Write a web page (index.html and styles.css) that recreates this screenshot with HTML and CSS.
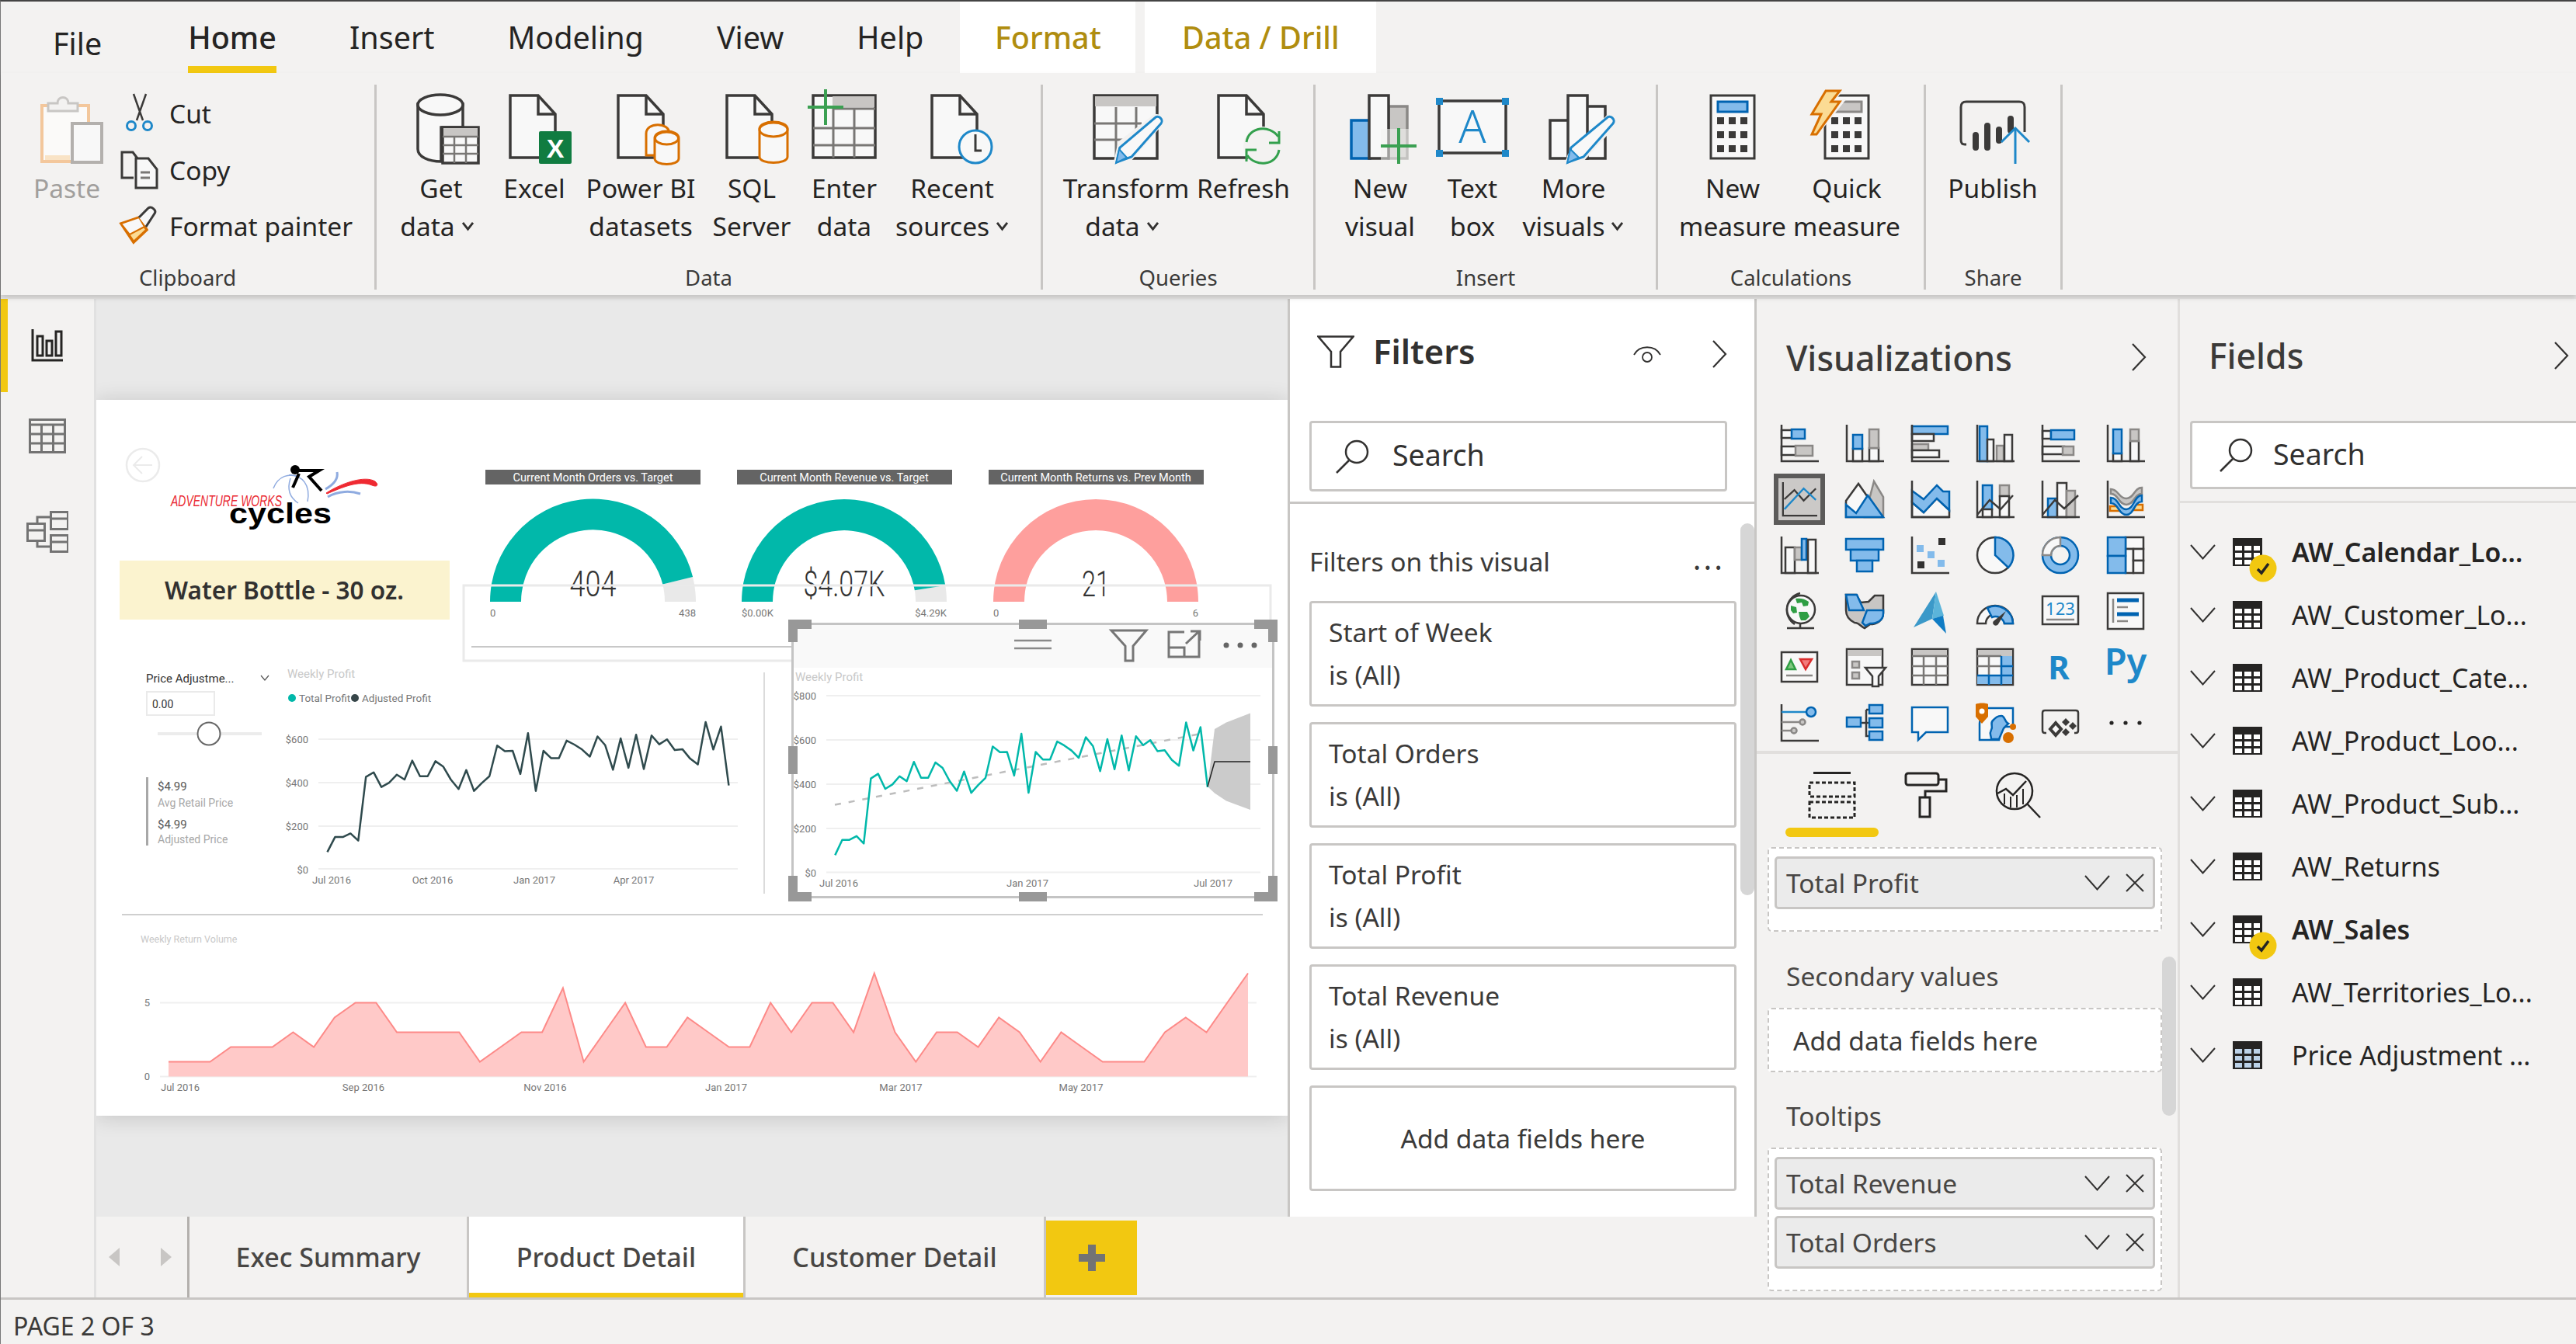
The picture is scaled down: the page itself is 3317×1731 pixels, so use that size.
FILE: index.html
```html
<!DOCTYPE html>
<html lang="en">
<head>
<meta charset="utf-8">
<title>Power BI Desktop</title>
<link rel="stylesheet" href="styles.css">
</head>
<body>
<svg class="defs" aria-hidden="true">
  <symbol id="doc" viewBox="0 0 62 84" overflow="visible">
    <path class="fw" d="M2 2H38L60 26V82H2Z"/><path class="ln" d="M38 2V26H60"/>
  </symbol>
  <symbol id="chev" viewBox="0 0 33 20"><path d="M1 1L16.500 18.500L32 1" fill="none" stroke="#323130" stroke-width="2"/></symbol>
  <symbol id="pchev" viewBox="0 0 20 36"><path d="M2 1L18 18L2 35" fill="none" stroke="#323130" stroke-width="2.200"/></symbol>
  <symbol id="xx" viewBox="0 0 24 24"><path d="M1 1L23 23M23 1L1 23" fill="none" stroke="#323130" stroke-width="2"/></symbol>
  <symbol id="mag" viewBox="0 0 44 44"><circle cx="28" cy="16" r="14" fill="none" stroke="#323130" stroke-width="2.500"/><path d="M18 27L2 43" fill="none" stroke="#323130" stroke-width="2.500"/></symbol>
  <symbol id="tbl" viewBox="0 0 38 36"><rect width="38" height="36" fill="#252423"/><g fill="#fff"><rect x="3" y="10" width="9" height="6"/><rect x="15" y="10" width="9" height="6"/><rect x="27" y="10" width="8" height="6"/><rect x="3" y="19" width="9" height="6"/><rect x="15" y="19" width="9" height="6"/><rect x="27" y="19" width="8" height="6"/><rect x="3" y="28" width="9" height="6"/><rect x="15" y="28" width="9" height="6"/><rect x="27" y="28" width="8" height="6"/></g></symbol>
  <symbol id="tblb" viewBox="0 0 38 36"><rect width="38" height="36" fill="#252423"/><g fill="#bcd2e8"><rect x="3" y="10" width="9" height="6"/><rect x="15" y="10" width="9" height="6"/><rect x="27" y="10" width="8" height="6"/><rect x="3" y="19" width="9" height="6"/><rect x="15" y="19" width="9" height="6"/><rect x="27" y="19" width="8" height="6"/><rect x="3" y="28" width="9" height="6"/><rect x="15" y="28" width="9" height="6"/><rect x="27" y="28" width="8" height="6"/></g></symbol>
  <symbol id="badge" viewBox="0 0 36 36"><circle cx="18" cy="18" r="17.500" fill="#f2c811"/><path d="M11 19L16 24L25 12" fill="none" stroke="#252423" stroke-width="3.500"/></symbol>
  <symbol id="caret" viewBox="0 0 18 14"><path d="M2 2L9 11L16 2" fill="none" stroke="#323130" stroke-width="3"/></symbol>
</svg>

<div class="app">
  <nav class="tabs">
    <span class="tab tab-file">File</span>
    <span class="tab tab-on"><span class="tab-under">Home</span></span>
    <span class="tab">Insert</span>
    <span class="tab">Modeling</span>
    <span class="tab">View</span>
    <span class="tab">Help</span>
    <span class="tab-ctx tab-format">Format</span>
    <span class="tab-ctx tab-drill">Data / Drill</span>
  </nav>

  <header class="ribbon">
    <section class="group g-clip">
      <div class="group-body">
        <div class="rb paste">
          <svg class="ri" viewBox="26 121 120 90">
            <rect x="54" y="136" width="60" height="72" fill="#fbfaf9" stroke="#f3c79c" stroke-width="4"/>
            <path d="M62 143H100V133H88C88 123 74 123 74 133H62Z" fill="#f3f2f1" stroke="#c8c6c4" stroke-width="3"/>
            <path d="M58 200H90V206H58Z" fill="#f9e3c6"/>
            <rect x="93" y="159" width="38" height="50" fill="#f8f8f8" stroke="#b3b0ad" stroke-width="4"/>
          </svg>
          <span class="rl dim">Paste</span>
        </div>
        <div class="smalls">
          <div class="srow">
            <svg class="si" viewBox="0 0 50 50"><path d="M17 0L29 34M33 0L21 34" fill="none" stroke="#3b3a39" stroke-width="2.500"/><circle cx="14" cy="41" r="5.500" fill="none" stroke="#1e88c9" stroke-width="3"/><circle cx="35" cy="41" r="5.500" fill="none" stroke="#1e88c9" stroke-width="3"/></svg>
            <span class="sl">Cut</span>
          </div>
          <div class="srow">
            <svg class="si" viewBox="0 0 50 50"><path d="M17 35H2V2H16L22 10" fill="#f3f2f1" stroke="#3b3a39" stroke-width="3"/><path d="M20 10H36L47 24V48H20Z" fill="#f8f8f8" stroke="#3b3a39" stroke-width="3"/><path d="M26 28H38M26 35H38" stroke="#797775" stroke-width="3"/></svg>
            <span class="sl">Copy</span>
          </div>
          <div class="srow">
            <svg class="si" viewBox="0 0 50 50"><path d="M1 22L17 46L34 30L24 14Z" fill="#fbdb94" stroke="#d86f00" stroke-width="3.500"/><path d="M1 22L24 14L31 26L12 36Z" fill="#f8f8f8" stroke="#d86f00" stroke-width="2"/><path d="M24 14L36 2C40 -1 47 5 44 9L33 26" fill="#f8f8f8" stroke="#3b3a39" stroke-width="3"/></svg>
            <span class="sl">Format painter</span>
          </div>
        </div>
      </div>
      <div class="group-label">Clipboard</div>
    </section>

    <section class="group g-data">
      <div class="group-body">
        <div class="rb w120">
          <svg class="ri" viewBox="508 121 120 90">
            <path class="fw" d="M538 134V192C538 202 552 208 568 208V164H596V134Z"/>
            <ellipse class="fw" cx="567" cy="135" rx="29" ry="13"/>
            <rect x="570" y="164" width="46" height="46" fill="#f8f8f8" stroke="#3b3a39" stroke-width="3.500"/>
            <rect x="571" y="165" width="44" height="11" fill="#c8c6c4"/>
            <path d="M570 176H616M585 176V210M600 176V210M570 187H616M570 198H616" stroke="#797775" stroke-width="2.500"/>
          </svg>
          <span class="rl">Get</span><span class="rl sh">data<svg class="caret"><use href="#caret"/></svg></span>
        </div>
        <div class="rb w120">
          <svg class="ri" viewBox="628 121 120 90">
            <use href="#doc" x="655" y="121" width="62" height="84"/>
            <rect x="694" y="169" width="42" height="42" rx="2" fill="#107c41"/>
            <text class="xl" x="715" y="203">X</text>
          </svg>
          <span class="rl">Excel</span><span class="rl">&nbsp;</span>
        </div>
        <div class="rb w154">
          <svg class="ri" viewBox="765 121 120 90">
            <use href="#doc" x="794" y="121" width="62" height="84"/>
            <path class="or" d="M832 172C832 157 862 157 862 172V200H832Z"/>
            <path class="or" d="M843 178V204C843 214 874 214 874 204V178C874 166 843 166 843 178Z"/>
            <ellipse class="or" cx="858.500" cy="178" rx="15" ry="8"/>
          </svg>
          <span class="rl">Power BI</span><span class="rl">datasets</span>
        </div>
        <div class="rb w132">
          <svg class="ri" viewBox="908 121 120 90">
            <use href="#doc" x="934" y="121" width="62" height="84"/>
            <path class="or" d="M978 166V202C978 212 1014 212 1014 202V166C1014 154 978 154 978 166Z"/>
            <ellipse class="or" cx="996" cy="167" rx="18" ry="9"/>
          </svg>
          <span class="rl">SQL</span><span class="rl">Server</span>
        </div>
        <div class="rb w106">
          <svg class="ri" viewBox="1027 121 120 90">
            <rect x="1047" y="123" width="80" height="80" fill="#f8f8f8" stroke="#3b3a39" stroke-width="3.500"/>
            <rect x="1072" y="124" width="54" height="14" fill="#c8c6c4"/>
            <path d="M1073 140H1127M1047 165H1127M1047 187H1127M1073 140V203M1100 140V203" stroke="#797775" stroke-width="3"/>
            <path d="M1063 115V161M1040 138H1086" stroke="#3ba052" stroke-width="4"/>
          </svg>
          <span class="rl">Enter</span><span class="rl">data</span>
        </div>
        <div class="rb w172">
          <svg class="ri" viewBox="1166 121 120 90">
            <use href="#doc" x="1198" y="121" width="62" height="84"/>
            <circle cx="1256" cy="189" r="21" fill="#f8f8f8" stroke="#1e88c9" stroke-width="3"/>
            <path d="M1256 173V194H1264" fill="none" stroke="#3b3a39" stroke-width="3"/>
          </svg>
          <span class="rl">Recent</span><span class="rl">sources<svg class="caret"><use href="#caret"/></svg></span>
        </div>
      </div>
      <div class="group-label">Data</div>
    </section>

    <section class="group g-query">
      <div class="group-body">
        <div class="rb w172">
          <svg class="ri" viewBox="1390 121 120 90">
            <rect x="1409" y="123" width="81" height="81" fill="#f8f8f8" stroke="#3b3a39" stroke-width="3.500"/>
            <rect x="1410" y="124" width="79" height="13" fill="#c8c6c4"/>
            <path d="M1437 138V204M1463 138V180M1409 159H1470M1409 180H1450" stroke="#797775" stroke-width="3"/>
            <path d="M1442 184L1484 152C1489 146 1498 152 1496 158L1456 204L1436 211Z" fill="#f8f8f8" stroke="#f3f2f1" stroke-width="5"/>
            <path d="M1438 209L1442 190L1487 152C1491 147 1499 154 1495 159L1457 202Z" fill="#f8f8f8" stroke="#1e88c9" stroke-width="3"/>
            <path d="M1437 210L1441 192L1451 203Z" fill="#83bbeb" stroke="#1e88c9" stroke-width="2"/>
          </svg>
          <span class="rl">Transform</span><span class="rl sh">data<svg class="caret"><use href="#caret"/></svg></span>
        </div>
        <div class="rb w130">
          <svg class="ri" viewBox="1541 121 120 90">
            <use href="#doc" x="1567" y="121" width="62" height="84"/>
            <circle cx="1626" cy="188" r="25" fill="#f3f2f1"/>
            <path d="M1605 183C1608 163 1635 160 1646 176M1647 193C1644 213 1617 216 1606 200" fill="none" stroke="#33a04d" stroke-width="3"/>
            <path d="M1647 169V184H1634M1605 208V193H1618" fill="none" stroke="#33a04d" stroke-width="3"/>
          </svg>
          <span class="rl">Refresh</span><span class="rl">&nbsp;</span>
        </div>
      </div>
      <div class="group-label">Queries</div>
    </section>

    <section class="group g-insert">
      <div class="group-body">
        <div class="rb w120">
          <svg class="ri" viewBox="1717 121 120 90">
            <rect x="1740" y="155" width="24" height="49" fill="#83bbeb" stroke="#0063b1" stroke-width="3.500"/>
            <rect x="1788" y="137" width="24" height="67" fill="#c8c6c4" stroke="#8a8886" stroke-width="3.500"/>
            <rect x="1763" y="123" width="25" height="81" fill="#f8f8f8" stroke="#3b3a39" stroke-width="3.500"/>
            <rect x="1778" y="166" width="46" height="44" fill="#f3f2f1" opacity=".55"/>
            <path d="M1801 165V211M1778 188H1824" stroke="#3ba052" stroke-width="4"/>
          </svg>
          <span class="rl">New</span><span class="rl">visual</span>
        </div>
        <div class="rb w118">
          <svg class="ri" viewBox="1836 121 120 90">
            <rect x="1853" y="130" width="86" height="67" fill="#f8f8f8" stroke="#3b3a39" stroke-width="3.500"/>
            <text class="tbA" x="1896" y="184">A</text>
            <path d="M1849 126h9v9h-9zM1934 126h9v9h-9zM1849 193h9v9h-9zM1934 193h9v9h-9z" fill="#1e88c9"/>
          </svg>
          <span class="rl">Text</span><span class="rl">box</span>
        </div>
        <div class="rb w142">
          <svg class="ri" viewBox="1966 121 120 90">
            <rect x="1996" y="155" width="24" height="49" fill="#f8f8f8" stroke="#3b3a39" stroke-width="3.500"/>
            <rect x="2043" y="137" width="24" height="67" fill="#f8f8f8" stroke="#3b3a39" stroke-width="3.500"/>
            <rect x="2019" y="123" width="25" height="81" fill="#f8f8f8" stroke="#3b3a39" stroke-width="3.500"/>
            <path d="M2021 200L2069 152C2073 146 2083 152 2079 160L2039 204L2017 212Z" fill="#f8f8f8" stroke="#f3f2f1" stroke-width="5"/>
            <path d="M2019 209L2023 190L2069 152C2073 147 2081 154 2077 159L2039 202Z" fill="#f8f8f8" stroke="#1e88c9" stroke-width="3"/>
            <path d="M2018 210L2022 192L2033 203Z" fill="#83bbeb" stroke="#1e88c9" stroke-width="2"/>
          </svg>
          <span class="rl">More</span><span class="rl">visuals<svg class="caret"><use href="#caret"/></svg></span>
        </div>
      </div>
      <div class="group-label">Insert</div>
    </section>

    <section class="group g-calc">
      <div class="group-body">
        <div class="rb w150">
          <svg class="ri" viewBox="2171 121 120 90">
            <rect x="2203" y="123" width="56" height="81" fill="#f8f8f8" stroke="#3b3a39" stroke-width="3"/>
            <rect x="2212" y="131" width="38" height="13" fill="#83bbeb" stroke="#0063b1" stroke-width="3"/>
            <path fill="#3b3a39" d="M2211 151h9v9h-9zM2226 151h9v9h-9zM2241 151h9v9h-9zM2211 169h9v9h-9zM2226 169h9v9h-9zM2241 169h9v9h-9zM2211 187h9v9h-9zM2226 187h9v9h-9zM2241 187h9v9h-9z"/>
          </svg>
          <span class="rl">New</span><span class="rl">measure</span>
        </div>
        <div class="rb w144">
          <svg class="ri" viewBox="2318 121 120 90">
            <rect x="2350" y="123" width="56" height="81" fill="#f8f8f8" stroke="#3b3a39" stroke-width="3"/>
            <rect x="2359" y="131" width="38" height="13" fill="#c8c6c4" stroke="#8a8886" stroke-width="3"/>
            <path fill="#3b3a39" d="M2358 151h9v9h-9zM2373 151h9v9h-9zM2388 151h9v9h-9zM2358 169h9v9h-9zM2373 169h9v9h-9zM2388 169h9v9h-9zM2358 187h9v9h-9zM2373 187h9v9h-9zM2388 187h9v9h-9z"/>
            <path d="M2351 117H2369L2358 131H2371L2335 176H2331L2345 147H2331Z" fill="#f3f2f1" stroke="#f3f2f1" stroke-width="6"/>
            <path d="M2351 117H2369L2358 131H2369L2339 173H2333L2345 147H2333Z" fill="#fbdb94" stroke="#d86f00" stroke-width="3"/>
          </svg>
          <span class="rl">Quick</span><span class="rl">measure</span>
        </div>
      </div>
      <div class="group-label">Calculations</div>
    </section>

    <section class="group g-share">
      <div class="group-body">
        <div class="rb w120">
          <svg class="ri" viewBox="2506 121 120 90">
            <path d="M2532 186H2530C2526 186 2525 184 2525 180V138C2525 133 2527 131 2532 131H2600C2605 131 2607 133 2607 138V170" fill="none" stroke="#3b3a39" stroke-width="3"/>
            <path d="M2544 174V190M2559 162V190M2574 167V181M2589 153V168" stroke="#3b3a39" stroke-width="8" stroke-linecap="round"/>
            <path d="M2577 183L2595 165L2613 183" fill="#f3f2f1" stroke="#1e88c9" stroke-width="3"/>
            <path d="M2595 165V211" stroke="#1e88c9" stroke-width="3"/>
          </svg>
          <span class="rl">Publish</span><span class="rl">&nbsp;</span>
        </div>
      </div>
      <div class="group-label">Share</div>
    </section>
  </header>

  <main class="main">
    <aside class="rail">
      <div class="rail-item rail-on">
        <svg class="rail-ic" viewBox="0 0 42 42"><path d="M2 0V40H41" fill="none" stroke="#252423" stroke-width="3"/><path d="M8 9h7v25h-7zM20 15h7v19h-7zM32 3h7v31h-7z" fill="none" stroke="#252423" stroke-width="3"/></svg>
      </div>
      <div class="rail-item">
        <svg class="rail-ic rail-t" viewBox="0 0 48 45"><path d="M1.500 1.500h45v42h-45zM1.500 8h45M1.500 20h45M1.500 32h45M16.500 8v36M31.500 8v36" fill="none" stroke="#737373" stroke-width="3"/></svg>
      </div>
      <div class="rail-item">
        <svg class="rail-ic rail-m" viewBox="0 0 54 54"><g fill="#f3f2f1" stroke="#737373" stroke-width="3"><path d="M14 16V8H32M14 38V46H32" fill="none"/><path d="M1.500 16.500h22v22h-22zM1.500 25h22M31.500 1.500h22v22h-22zM31.500 10h22M31.500 31.500h22v21h-22zM31.500 40h22"/></g></svg>
      </div>
    </aside>

    <div class="center">
      <div class="center-row">
        <div class="canvas">
          <div class="page">
            <svg class="report" viewBox="124 515 1534 922">
              <!-- back button -->
              <circle cx="184" cy="599" r="21" fill="#fff" stroke="#ebebeb" stroke-width="2.500"/>
              <path d="M196 599H172M183 588L172 599L183 610" fill="none" stroke="#ebebeb" stroke-width="2"/>

              <!-- logo -->
              <path d="M352 629C358 613 372 609 386 614M372 612C390 612 400 625 396 646M374 616C370 628 372 640 384 648" fill="none" stroke="#8fabe0" stroke-width="1.500"/>
              <circle cx="380" cy="605" r="6" fill="#000"/>
              <path d="M384 606H411L398 614L414 632M385 610L377 628" fill="none" stroke="#000" stroke-width="4"/>
              <path d="M420 635C440 622 470 612 483 620C488 624 486 628 479 625C462 618 440 628 421 636Z" fill="#ef2a32" stroke="#ef2a32"/>
              <path d="M419 630C428 625 436 618 434 608M422 640C436 632 452 632 464 636" fill="none" stroke="#8fabe0" stroke-width="3"/>
              <text class="logo-a" x="220" y="652" textLength="143" lengthAdjust="spacingAndGlyphs">ADVENTURE WORKS</text>
              <text class="logo-b" x="295" y="674" textLength="132" lengthAdjust="spacingAndGlyphs">cycles</text>

              <!-- title card -->
              <rect x="154" y="722" width="425" height="76" fill="#fbf3cf"/>
              <text class="card-title" x="366" y="772">Water Bottle - 30 oz.</text>

              <!-- gauges -->
              <rect x="625" y="605" width="277" height="19" fill="#646464"/>
              <text class="g-head" x="763.500" y="620">Current Month Orders vs. Target</text>
              <path d="M892.100 743A132.500 132.500 0 0 1 896 775H856A92.500 92.500 0 0 0 853.300 752.600Z" fill="#e9e9e9"/>
              <path d="M631 775A132.500 132.500 0 0 1 892.100 743L853.300 752.600A92.500 92.500 0 0 0 671 775Z" fill="#01b8aa"/>
              <text class="g-val" x="763.500" y="768" textLength="60" lengthAdjust="spacingAndGlyphs">404</text>
              <text class="axis" x="631" y="794">0</text>
              <text class="axis end" x="896" y="794">438</text>

              <rect x="949" y="605" width="277" height="19" fill="#646464"/>
              <text class="g-head" x="1087" y="620">Current Month Revenue vs. Target</text>
              <path d="M1217.300 753.900A132 132 0 0 1 1219 775H1179A92 92 0 0 0 1177.800 760.300Z" fill="#e9e9e9"/>
              <path d="M955 775A132 132 0 0 1 1217.300 753.900L1177.800 760.300A92 92 0 0 0 995 775Z" fill="#01b8aa"/>
              <text class="g-val" x="1087" y="768" textLength="105" lengthAdjust="spacingAndGlyphs">$4.07K</text>
              <text class="axis" x="955" y="794">$0.00K</text>
              <text class="axis end" x="1219" y="794">$4.29K</text>

              <rect x="1273" y="605" width="277" height="19" fill="#646464"/>
              <text class="g-head" x="1411" y="620">Current Month Returns vs. Prev Month</text>
              <path d="M1279 775A132 132 0 0 1 1543 775H1503A92 92 0 0 0 1319 775Z" fill="#fe9f9d"/>
              <text class="g-val" x="1411" y="768" textLength="36" lengthAdjust="spacingAndGlyphs">21</text>
              <text class="axis" x="1279" y="794">0</text>
              <text class="axis end" x="1543" y="794">6</text>

              <!-- hovered group outline -->
              <path d="M1636 804V754H597V851H1020" fill="none" stroke="#eaeaea" stroke-width="3"/>
              <path d="M607 833H1020" stroke="#c8c8c8" stroke-width="2"/>

              <!-- slicer -->
              <text class="sl-t" x="188" y="879">Price Adjustme...</text>
              <path d="M336 870L341 876L346 870" fill="none" stroke="#555" stroke-width="1.200"/>
              <rect x="189" y="891" width="87" height="30" fill="#fff" stroke="#eaeaea" stroke-width="2"/>
              <text class="sl-v" x="196" y="912">0.00</text>
              <rect x="203" y="943" width="134" height="4" fill="#ececec"/>
              <circle cx="269" cy="945" r="14.500" fill="#fff" stroke="#666" stroke-width="2"/>

              <!-- KPIs -->
              <rect x="188" y="1001" width="3" height="88" fill="#a8a8a8"/>
              <text class="k-v" x="203" y="1018">$4.99</text>
              <text class="k-l" x="203" y="1039">Avg Retail Price</text>
              <text class="k-v" x="203" y="1067">$4.99</text>
              <text class="k-l" x="203" y="1086">Adjusted Price</text>

              <!-- chart one -->
              <text class="c-title" x="370" y="873">Weekly Profit</text>
              <circle cx="376" cy="899" r="5" fill="#01b8aa"/>
              <text class="leg" x="385" y="904">Total Profit</text>
              <circle cx="457" cy="899" r="5" fill="#374649"/>
              <text class="leg" x="466" y="904">Adjusted Profit</text>
              <path class="grid" d="M410 952H950M410 1008H950M410 1064H950M410 1119H950"/>
              <text class="axis end" x="397" y="957">$600</text>
              <text class="axis end" x="397" y="1013">$400</text>
              <text class="axis end" x="397" y="1069">$200</text>
              <text class="axis end" x="397" y="1125">$0</text>
              <text class="axis mid" x="427" y="1138">Jul 2016</text>
              <text class="axis mid" x="557" y="1138">Oct 2016</text>
              <text class="axis mid" x="688" y="1138">Jan 2017</text>
              <text class="axis mid" x="816" y="1138">Apr 2017</text>
              <polyline class="line-dark" points="421.5,1097.4 431.4,1078.1 441.4,1078.1 451.3,1073.4 461.3,1082.7 471.2,1000.6 481.1,994.7 491.1,1013.7 501,1008.2 511,997.7 520.9,1004 530.8,979.6 540.8,999.8 550.7,999.8 560.7,980.4 570.6,987.2 580.5,1004 590.5,1016.2 600.4,991.8 610.4,1018.7 620.3,1008.6 630.2,999.8 640.2,960.2 650.1,967.4 660.1,967 670,996.9 679.9,944.2 689.9,1018.7 699.8,967 709.8,976.6 719.7,976.6 729.6,953.9 739.6,959 749.5,965.3 759.5,974.5 769.4,948.5 779.3,959.8 789.3,991.4 799.2,951 809.2,988.9 819.1,946.3 829,990.5 839,947.2 848.9,958.6 858.9,952.2 868.8,966.1 878.7,964.9 888.7,977.1 898.6,984.6 908.6,929.9 918.5,965.3 928.4,935.8 938.4,1011.6"/>
              <path d="M984 866V1151" stroke="#cfcfcf" stroke-width="1.500"/>

              <!-- focused visual -->
              <rect x="1020.500" y="803.500" width="619" height="352" fill="#fff" stroke="#c4c4c4" stroke-width="3"/>
              <rect x="1022" y="805" width="616" height="55" fill="#f9f9f9"/>
              <path d="M1306 825H1354M1306 835H1354" stroke="#8a8a8a" stroke-width="2.500"/>
              <path d="M1431 812H1476L1459 832V851H1449V832Z" fill="none" stroke="#767676" stroke-width="3"/>
              <path d="M1525 814H1505V846H1544V814M1505 834H1525V846M1527 829L1544 813M1533 813H1545V825" fill="none" stroke="#767676" stroke-width="3"/>
              <circle cx="1579" cy="831" r="3.500" fill="#666"/><circle cx="1597" cy="831" r="3.500" fill="#666"/><circle cx="1615" cy="831" r="3.500" fill="#666"/>
              <text class="c-title" x="1024" y="877">Weekly Profit</text>
              <path class="grid" d="M1064 896H1623M1064 953H1623M1064 1010H1623M1064 1067H1623M1064 1123.500H1623"/>
              <text class="axis end" x="1051" y="901">$800</text>
              <text class="axis end" x="1051" y="958">$600</text>
              <text class="axis end" x="1051" y="1015">$400</text>
              <text class="axis end" x="1051" y="1072">$200</text>
              <text class="axis end" x="1051" y="1129">$0</text>
              <text class="axis mid" x="1080" y="1142">Jul 2016</text>
              <text class="axis mid" x="1323" y="1142">Jan 2017</text>
              <text class="axis mid" x="1562" y="1142">Jul 2017</text>
              <path d="M1555 1013L1564 939L1579 930.400L1610 918.600V1043L1579 1031.500L1564 1021.600Z" fill="#cbcbcb"/>
              <path d="M1075 1036.600L1551 944" fill="none" stroke="#bdbdbd" stroke-width="2.500" stroke-dasharray="8 10"/>
              <polyline class="line-teal" points="1075.3,1101.4 1084.5,1081.7 1093.8,1081.7 1103,1076.9 1112.2,1086.4 1121.4,1002.6 1130.7,996.6 1139.9,1016 1149.1,1010.4 1158.3,999.7 1167.6,1006.1 1176.8,981.2 1186,1001.8 1195.2,1001.8 1204.5,982 1213.7,989 1222.9,1006.1 1232.1,1018.5 1241.4,993.7 1250.6,1021.1 1259.8,1010.8 1269,1001.8 1278.3,961.4 1287.5,968.8 1296.7,968.4 1305.9,998.9 1315.2,945.1 1324.4,1021.1 1333.6,968.4 1342.8,978.2 1352.1,978.2 1361.3,955 1370.5,960.2 1379.7,966.6 1389,976 1398.2,949.5 1407.4,961 1416.6,993.2 1425.9,952 1435.1,990.7 1444.3,947.2 1453.5,992.3 1462.8,948.2 1472,959.8 1481.2,953.3 1490.4,967.4 1499.7,966.2 1508.9,978.7 1518.1,986.3 1527.3,930.5 1536.6,966.6 1545.8,936.5 1555,1013.9"/>
              <path d="M1555 1013L1564 981H1610" fill="none" stroke="#222" stroke-width="1.500"/>
              <path fill="#989898" d="M1015 798H1045V810H1027V827H1015ZM1615 798H1645V827H1633V810H1615ZM1015 1128H1027V1149H1045V1161H1015ZM1633 1128H1645V1161H1615V1149H1633ZM1312 798H1348V810H1312ZM1312 1149H1348V1161H1312ZM1015 961H1027V997H1015ZM1633 961H1645V997H1633Z"/>

              <!-- return volume -->
              <path d="M157 1178H1626" stroke="#cfcfcf" stroke-width="2"/>
              <text class="c-title small" x="181" y="1214">Weekly Return Volume</text>
              <path class="grid" d="M206 1291.500H1618M206 1386.500H1618"/>
              <text class="axis end" x="193" y="1296">5</text>
              <text class="axis end" x="193" y="1391">0</text>
              <text class="axis mid" x="232" y="1405">Jul 2016</text>
              <text class="axis mid" x="468" y="1405">Sep 2016</text>
              <text class="axis mid" x="702" y="1405">Nov 2016</text>
              <text class="axis mid" x="935" y="1405">Jan 2017</text>
              <text class="axis mid" x="1160" y="1405">Mar 2017</text>
              <text class="axis mid" x="1392" y="1405">May 2017</text>
              <polygon fill="#ffc9c8" points="217,1386.5 217,1367.5 243.7,1367.5 270.5,1367.5 297.2,1348.5 323.9,1348.5 350.7,1348.5 377.4,1329.5 404.1,1348.5 430.8,1310.5 457.6,1291.5 484.3,1291.5 511,1329.5 537.8,1329.5 564.5,1329.5 591.2,1329.5 617.9,1367.5 644.7,1348.5 671.4,1329.5 698.1,1329.5 724.9,1272.5 751.6,1367.5 778.3,1329.5 805.1,1291.5 831.8,1348.5 858.5,1348.5 885.2,1310.5 912,1329.5 938.7,1348.5 965.4,1348.5 992.2,1291.5 1018.9,1329.5 1045.6,1291.5 1072.4,1291.5 1099.1,1329.5 1125.8,1253.5 1152.5,1329.5 1179.3,1367.5 1206,1329.5 1232.7,1329.5 1259.5,1348.5 1286.2,1310.5 1312.9,1329.5 1339.7,1367.5 1366.4,1329.5 1393.1,1348.5 1419.8,1367.5 1446.6,1367.5 1473.3,1367.5 1500,1329.5 1526.8,1310.5 1553.5,1329.5 1580.2,1291.5 1607,1253.5 1607,1386.5"/>
              <polyline class="line-pink" points="217,1367.5 243.7,1367.5 270.5,1367.5 297.2,1348.5 323.9,1348.5 350.7,1348.5 377.4,1329.5 404.1,1348.5 430.8,1310.5 457.6,1291.5 484.3,1291.5 511,1329.5 537.8,1329.5 564.5,1329.5 591.2,1329.5 617.9,1367.5 644.7,1348.5 671.4,1329.5 698.1,1329.5 724.9,1272.5 751.6,1367.5 778.3,1329.5 805.1,1291.5 831.8,1348.5 858.5,1348.5 885.2,1310.5 912,1329.5 938.7,1348.5 965.4,1348.5 992.2,1291.5 1018.9,1329.5 1045.6,1291.5 1072.4,1291.5 1099.1,1329.5 1125.8,1253.5 1152.5,1329.5 1179.3,1367.5 1206,1329.5 1232.7,1329.5 1259.5,1348.5 1286.2,1310.5 1312.9,1329.5 1339.7,1367.5 1366.4,1329.5 1393.1,1348.5 1419.8,1367.5 1446.6,1367.5 1473.3,1367.5 1500,1329.5 1526.8,1310.5 1553.5,1329.5 1580.2,1291.5 1607,1253.5"/>
            </svg>
          </div>
        </div>

        <aside class="filters">
          <div class="f-head">
            <svg class="f-funnel" viewBox="0 0 48 42"><path d="M1.500 1.500H46.500L30 21V40.500H18V21Z" fill="none" stroke="#323130" stroke-width="2.500"/></svg>
            <span class="f-title">Filters</span>
            <svg class="f-eye" viewBox="0 0 36 24"><path d="M1 13C8 0 28 0 35 13" fill="none" stroke="#323130" stroke-width="1.800"/><circle cx="18" cy="16" r="6" fill="none" stroke="#323130" stroke-width="1.800"/></svg>
            <svg class="pchev"><use href="#pchev"/></svg>
          </div>
          <div class="search f-search">
            <svg class="mag"><use href="#mag"/></svg><span>Search</span>
          </div>
          <div class="f-sep"></div>
          <div class="f-sec"><span>Filters on this visual</span><span class="f-dots">...</span></div>
          <div class="f-card">Start of Week<br>is (All)</div>
          <div class="f-card">Total Orders<br>is (All)</div>
          <div class="f-card">Total Profit<br>is (All)</div>
          <div class="f-card">Total Revenue<br>is (All)</div>
          <div class="f-card f-add">Add data fields here</div>
          <div class="thumb f-thumb"></div>
        </aside>
      </div>

      <div class="pagebar">
        <div class="pg-nav">
          <svg class="pg-arrow" viewBox="0 0 14 24"><path d="M14 0V24L0 12Z" fill="#c8c6c4"/></svg>
          <svg class="pg-arrow" viewBox="0 0 14 24"><path d="M0 0V24L14 12Z" fill="#c8c6c4"/></svg>
        </div>
        <div class="pg pg1">Exec Summary</div>
        <div class="pg pg2 pg-on">Product Detail</div>
        <div class="pg pg3">Customer Detail</div>
        <div class="pg-add"><svg class="pg-plus" viewBox="0 0 34 34"><path d="M12 0H22V12H34V22H22V34H12V22H0V12H12Z" fill="#737373"/></svg></div>
      </div>
    </div>

    <aside class="viz">
      <div class="p-head"><span class="p-title">Visualizations</span><svg class="pchev"><use href="#pchev"/></svg></div>
      <div class="viz-grid">
        <div class="vc"><svg class="vi" viewBox="0 0 50 50"><rect class="w" x="2" y="8" width="14" height="10"/><rect class="b" x="15" y="7" width="17" height="12"/><rect class="w" x="2" y="29" width="20" height="11"/><rect class="g" x="20" y="28" width="22" height="13"/><path class="ax" d="M2 1V48H50"/></svg></div>
        <div class="vc"><svg class="vi" viewBox="0 0 50 50"><rect class="w" x="10" y="32" width="12" height="16"/><rect class="b" x="10" y="14" width="12" height="18"/><rect class="w" x="31" y="31" width="12" height="17"/><rect class="g" x="31" y="7" width="12" height="24"/><path class="ax" d="M2 1V48H50"/></svg></div>
        <div class="vc"><svg class="vi" viewBox="0 0 50 50"><rect class="b" x="2" y="3" width="46" height="10"/><rect class="w" x="2" y="13" width="28" height="9"/><rect class="g" x="2" y="26" width="21" height="8"/><rect class="w" x="2" y="34" width="35" height="9"/><path class="ax" d="M2 1V48H50"/></svg></div>
        <div class="vc"><svg class="vi" viewBox="0 0 50 50"><rect class="b" x="5" y="3" width="10" height="45"/><rect class="w" x="15" y="20" width="8" height="28"/><rect class="g" x="27" y="28" width="9" height="20"/><rect class="w" x="37" y="14" width="10" height="34"/><path class="ax" d="M2 1V48H50"/></svg></div>
        <div class="vc"><svg class="vi" viewBox="0 0 50 50"><rect class="w" x="2" y="9" width="11" height="10"/><rect class="b" x="13" y="8" width="30" height="12"/><rect class="w" x="2" y="29" width="28" height="10"/><rect class="g" x="28" y="29" width="14" height="11"/><path class="ax" d="M2 1V48H50"/></svg></div>
        <div class="vc"><svg class="vi" viewBox="0 0 50 50"><rect class="w" x="9" y="38" width="11" height="10"/><rect class="b" x="9" y="7" width="11" height="31"/><rect class="w" x="31" y="22" width="11" height="26"/><rect class="g" x="31" y="7" width="11" height="15"/><path class="ax" d="M2 1V48H50"/></svg></div>

        <div class="vc"><div class="vsel"><svg class="vi" viewBox="0 0 50 50"><path class="ax" d="M2 1V48H50"/><path class="l" d="M4 25L18 12L31 27L48 10"/><path class="lb" d="M4 39L31 10L48 26"/></svg></div></div>
        <div class="vc"><svg class="vi" viewBox="0 0 50 50"><path class="g" d="M37 2L49 22V48H25Z"/><path class="w" d="M1 27L17 5L47 48H1Z"/><path class="b" d="M1 32L14 43L29 20L49 48H1Z"/></svg></div>
        <div class="vc"><svg class="vi" viewBox="0 0 50 50"><path class="w" d="M2 29L17 42L34 24L50 39V48H2Z"/><path class="b" d="M2 14L17 25L34 7L42 15H50V39L34 24L17 42L2 29Z"/><path class="ax" d="M2 1V48H50"/></svg></div>
        <div class="vc"><svg class="vi" viewBox="0 0 50 50"><rect class="b" x="9" y="7" width="12" height="31"/><rect class="w" x="9" y="38" width="12" height="10"/><rect class="g" x="31" y="7" width="12" height="14"/><rect class="w" x="31" y="21" width="12" height="27"/><path class="ax" d="M2 1V48H50"/><path class="l" d="M2 45L18 26L32 38L48 20"/></svg></div>
        <div class="vc"><svg class="vi" viewBox="0 0 50 50"><rect class="b" x="9" y="24" width="12" height="24"/><rect class="w" x="21" y="4" width="12" height="44"/><rect class="g" x="33" y="14" width="11" height="34"/><path class="ax" d="M2 1V48H50"/><path class="l" d="M2 45L18 26L30 37L48 20"/></svg></div>
        <div class="vc"><svg class="vi" viewBox="0 0 50 50"><rect x="5" y="34" width="12" height="6" fill="#fbdb94" stroke="#d86f00" stroke-width="2.500"/><rect x="35" y="32" width="12" height="7" fill="#fbdb94" stroke="#d86f00" stroke-width="2.500"/><path class="g" d="M6 12C16 12 16 24 26 24C36 24 36 10 46 10V18C36 18 36 32 26 32C16 32 16 18 6 18Z"/><path class="b" d="M6 23C16 23 16 38 26 38C36 38 36 20 46 20V28C36 28 36 45 26 45C16 45 16 30 6 30Z"/><path class="ax" d="M2 1V48H50"/></svg></div>

        <div class="vc"><svg class="vi" viewBox="0 0 50 50"><rect class="w" x="7" y="15" width="12" height="33"/><rect class="g" x="19" y="15" width="9" height="16"/><rect class="b" x="28" y="4" width="6" height="27"/><rect class="w" x="36" y="5" width="10" height="43"/><path class="ax" d="M2 1V48H50"/></svg></div>
        <div class="vc"><svg class="vi" viewBox="0 0 50 50"><rect class="b" x="1" y="4" width="48" height="14"/><rect class="b" x="7" y="18" width="36" height="14"/><rect class="b" x="15" y="32" width="20" height="14"/></svg></div>
        <div class="vc"><svg class="vi" viewBox="0 0 50 50"><path class="ax" d="M2 1V48H50"/><path fill="#83bbeb" d="M8 12h9v9h-9zM22 20h9v9h-9zM35 31h9v9h-9z"/><path fill="#323130" d="M36 3h9v9h-9zM9 33h9v9h-9z"/></svg></div>
        <div class="vc"><svg class="vi" viewBox="0 0 50 50"><circle class="w" cx="25" cy="25" r="23"/><path class="b" d="M25 2A23 23 0 0 1 42 41L25 25Z"/></svg></div>
        <div class="vc"><svg class="vi" viewBox="0 0 50 50"><circle class="b" cx="25" cy="25" r="23"/><circle cx="25" cy="25" r="12" fill="#f3f2f1" stroke="#0063b1" stroke-width="2.500"/><path d="M25 2A23 23 0 0 0 2 25H13A12 12 0 0 1 25 13Z" fill="#f8f8f8" stroke="#8a8886" stroke-width="2.500"/></svg></div>
        <div class="vc"><svg class="vi" viewBox="0 0 50 50"><rect class="w" x="25" y="2" width="23" height="15"/><rect class="w" x="25" y="17" width="10" height="31"/><rect class="w" x="35" y="17" width="13" height="15"/><rect class="w" x="35" y="32" width="13" height="16"/><rect class="b" x="2" y="2" width="23" height="24"/><rect class="b" x="2" y="26" width="23" height="22"/></svg></div>

        <div class="vc"><svg class="vi" viewBox="0 0 50 50"><path class="l" d="M26 2A22 22 0 0 0 19 42"/><circle cx="27" cy="23" r="18" fill="#f8f8f8" stroke="#3b3a39" stroke-width="2.500"/><path fill="#2f9e44" d="M20 9C26 8 32 9 37 13L36 18L30 19L28 14L22 15ZM14 18L21 20L22 27L17 28L14 24ZM24 26L35 26L38 32L33 37L27 37L25 32Z"/><path class="l" d="M9 47H44M26 41V47"/></svg></div>
        <div class="vc"><svg class="vi" viewBox="0 0 50 50"><path class="g g-dark" d="M1 4H14L20 14L30 13L38 5H49V27C49 38 40 42 32 42L25 47C20 45 18 40 12 40C6 37 1 32 1 24Z"/><path class="b" d="M1 4H15L24 24H5Z"/><path class="b" d="M28 24H49V28C49 38 40 41 32 41L26 44L22 40Z"/></svg></div>
        <div class="vc"><svg class="vi" viewBox="0 0 50 50"><path fill="#3b99c9" d="M33 0L4 46L28 35Z"/><path fill="#5bb4da" d="M33 0L28 35L43 31Z"/><path fill="#0f7cc4" d="M28 35L46 54L42 31Z"/></svg></div>
        <div class="vc"><svg class="vi" viewBox="0 0 50 50"><path d="M2 41A23 23 0 0 1 48 41H37A12 12 0 0 0 13 41Z" fill="#f8f8f8" stroke="#3b3a39" stroke-width="2.500"/><path class="b" d="M15 21A23 23 0 0 1 48 41H37A12 12 0 0 0 21 33Z"/><path fill="#3b3a39" d="M39 25L29 42C26 46 20 42 23 38Z"/></svg></div>
        <div class="vc"><svg class="vi" viewBox="0 0 50 50"><rect class="w" x="2" y="6" width="46" height="36"/><text class="v123" x="25" y="30">123</text><path d="M7 36H43" stroke="#8a8886" stroke-width="2.500"/></svg></div>
        <div class="vc"><svg class="vi" viewBox="0 0 50 50"><rect class="w" x="2" y="2" width="46" height="46"/><path d="M9 9V40" stroke="#8a8886" stroke-width="2.500"/><path d="M14 11H42M14 29H42" stroke="#0063b1" stroke-width="5"/><path d="M14 20H28M14 38H28" stroke="#8a8886" stroke-width="2.500"/></svg></div>

        <div class="vc"><svg class="vi" viewBox="0 0 50 50"><rect class="w" x="2" y="6" width="46" height="38"/><path d="M8 28L14 16L20 28Z" fill="#7fc97f" stroke="#2f9e44" stroke-width="2.500"/><path d="M26 15H41L33 28Z" fill="#f27b7b" stroke="#d92c2c" stroke-width="2.500"/><path d="M8 36H42" stroke="#8a8886" stroke-width="2.500"/></svg></div>
        <div class="vc"><svg class="vi" viewBox="0 0 50 50"><rect class="w" x="2" y="2" width="46" height="46"/><rect x="3" y="3" width="44" height="8" fill="#c8c6c4"/><rect x="9" y="18" width="9" height="8" fill="#c8c6c4" stroke="#8a8886" stroke-width="2.500"/><rect x="9" y="32" width="9" height="8" fill="#c8c6c4" stroke="#8a8886" stroke-width="2.500"/><path d="M26 26H52L43 37V50H35V37Z" fill="#f8f8f8" stroke="#3b3a39" stroke-width="2.500"/></svg></div>
        <div class="vc"><svg class="vi" viewBox="0 0 50 50"><rect class="w" x="2" y="2" width="46" height="46"/><rect x="3" y="3" width="44" height="8" fill="#c8c6c4"/><path d="M2 11H48M2 24H48M2 36H48M17 11V48M33 11V48" stroke="#797775" stroke-width="2.500"/></svg></div>
        <div class="vc"><svg class="vi" viewBox="0 0 50 50"><rect class="w" x="2" y="2" width="46" height="46"/><rect x="3" y="3" width="44" height="8" fill="#c8c6c4"/><path fill="#83bbeb" d="M32 11H47V47H2V36H32Z"/><path d="M2 11H33M2 24H33M17 11V36" stroke="#797775" stroke-width="2.500"/><path d="M33 11V48M2 36H48M33 24H48M17 36V48" stroke="#0063b1" stroke-width="2.500"/></svg></div>
        <div class="vc"><svg class="vi" viewBox="0 0 50 50"><text class="vR" x="23" y="41">R</text></svg></div>
        <div class="vc"><svg class="vi" viewBox="0 0 50 50"><text class="vPy" x="25" y="35">Py</text></svg></div>

        <div class="vc"><svg class="vi" viewBox="0 0 50 50"><path class="ax" d="M2 1V48H50"/><path d="M2 11H34" stroke="#1e88c9" stroke-width="2.500"/><circle cx="40" cy="11" r="6" fill="#83bbeb" stroke="#0063b1" stroke-width="2.500"/><path d="M2 24H26M2 35H16" stroke="#8a8886" stroke-width="2.500"/><circle cx="29" cy="24" r="3.500" fill="#c8c6c4" stroke="#8a8886" stroke-width="2.500"/><circle cx="18" cy="35" r="3.500" fill="#c8c6c4" stroke="#8a8886" stroke-width="2.500"/></svg></div>
        <div class="vc"><svg class="vi" viewBox="0 0 50 50"><path class="l" d="M19 25H31M27 8V42H31M27 8H31"/><rect class="b" x="2" y="18" width="18" height="12"/><rect class="b" x="31" y="2" width="17" height="11"/><rect class="b" x="31" y="19" width="17" height="12"/><rect class="b" x="31" y="36" width="17" height="11"/></svg></div>
        <div class="vc"><svg class="vi" viewBox="0 0 50 50"><path d="M2 5H48V37H20L10 47V37H2Z" fill="#f8f8f8" stroke="#0063b1" stroke-width="2.500"/></svg></div>
        <div class="vc"><svg class="vi" viewBox="0 0 50 50"><path class="b b-white" d="M7 6H48V30H34L30 47H5V26Z"/><path class="b" d="M22 22C26 18 28 16 33 16C38 16 37 24 42 26L36 32L30 46H20C20 40 17 40 20 34C23 30 18 26 22 22Z"/><path fill="#d86f00" d="M0 1C3 -1 14 -1 16 1V17L8 26L0 17Z"/><circle cx="8" cy="10" r="3.500" fill="#fff"/><circle cx="48" cy="30" r="4" fill="#d86f00"/><circle cx="42" cy="44" r="7" fill="#d86f00"/></svg></div>
        <div class="vc"><svg class="vi" viewBox="0 0 50 50"><path class="l" d="M7 38H5C3 38 2 37 2 35V12C2 10 3 9 5 9H45C47 9 48 10 48 12V35C48 37 47 38 45 38H43"/><path d="M12 33L19 25L26 33L19 41Z" fill="#f8f8f8" stroke="#3b3a39" stroke-width="4"/><path fill="#3b3a39" d="M32 19l5 5l-5 5l-5-5zM41 24l5 5l-5 5l-5-5zM32 32l5 5l-5 5l-5-5z"/></svg></div>
        <div class="vc"><svg class="vi" viewBox="0 0 50 50"><circle cx="7" cy="25" r="2.600" fill="#252423"/><circle cx="25" cy="25" r="2.600" fill="#252423"/><circle cx="43" cy="25" r="2.600" fill="#252423"/></svg></div>
      </div>
      <div class="viz-sep"></div>
      <div class="viz-tabs">
        <div class="vt vt-on">
          <svg class="vti" viewBox="0 0 60 60"><path d="M6 1.500H54" stroke="#252423" stroke-width="3"/><rect x="1" y="14" width="58" height="18" fill="none" stroke="#252423" stroke-width="3" stroke-dasharray="5 3"/><rect x="1" y="39" width="58" height="20" fill="none" stroke="#252423" stroke-width="3" stroke-dasharray="5 3"/></svg>
          <div class="vt-bar"></div>
        </div>
        <div class="vt">
          <svg class="vti" viewBox="0 0 60 60"><rect x="5" y="2" width="42" height="15" rx="3" fill="none" stroke="#252423" stroke-width="3"/><path d="M47 10H57V25H30V33" fill="none" stroke="#252423" stroke-width="3"/><rect x="23" y="33" width="13" height="25" fill="none" stroke="#252423" stroke-width="3"/></svg>
          <div class="vt-bar hide"></div>
        </div>
        <div class="vt">
          <svg class="vti" viewBox="0 0 60 60"><circle cx="25" cy="25" r="23" fill="none" stroke="#252423" stroke-width="2.500"/><path d="M3 28L14 22L23 30L40 12" fill="none" stroke="#252423" stroke-width="2.500"/><path d="M12 28V42M20 32V46M28 30V46M36 22V42" stroke="#252423" stroke-width="2"/><path d="M41 41L58 59" stroke="#252423" stroke-width="2.500"/></svg>
          <div class="vt-bar hide"></div>
        </div>
      </div>
      <div class="well well1">
        <div class="chip"><span class="chip-t">Total Profit</span><svg class="chip-v"><use href="#chev"/></svg><svg class="chip-x"><use href="#xx"/></svg></div>
      </div>
      <div class="well-label wl2">Secondary values</div>
      <div class="well well2">Add data fields here</div>
      <div class="well-label wl3">Tooltips</div>
      <div class="well well3">
        <div class="chip"><span class="chip-t">Total Revenue</span><svg class="chip-v"><use href="#chev"/></svg><svg class="chip-x"><use href="#xx"/></svg></div>
        <div class="chip"><span class="chip-t">Total Orders</span><svg class="chip-v"><use href="#chev"/></svg><svg class="chip-x"><use href="#xx"/></svg></div>
      </div>
      <div class="thumb v-thumb"></div>
    </aside>

    <aside class="fields">
      <div class="p-head fd-head"><span class="p-title">Fields</span><svg class="pchev"><use href="#pchev"/></svg></div>
      <div class="search fd-search"><svg class="mag"><use href="#mag"/></svg><span>Search</span></div>
      <div class="fd-sep"></div>
      <ul class="fd-list">
        <li class="fd"><svg class="fd-chev"><use href="#chev"/></svg><span class="fd-ic"><svg class="fd-tbl"><use href="#tbl"/></svg><svg class="fd-badge"><use href="#badge"/></svg></span><span class="fd-n on">AW_Calendar_Lo...</span></li>
        <li class="fd"><svg class="fd-chev"><use href="#chev"/></svg><span class="fd-ic"><svg class="fd-tbl"><use href="#tbl"/></svg></span><span class="fd-n">AW_Customer_Lo...</span></li>
        <li class="fd"><svg class="fd-chev"><use href="#chev"/></svg><span class="fd-ic"><svg class="fd-tbl"><use href="#tbl"/></svg></span><span class="fd-n">AW_Product_Cate...</span></li>
        <li class="fd"><svg class="fd-chev"><use href="#chev"/></svg><span class="fd-ic"><svg class="fd-tbl"><use href="#tbl"/></svg></span><span class="fd-n">AW_Product_Loo...</span></li>
        <li class="fd"><svg class="fd-chev"><use href="#chev"/></svg><span class="fd-ic"><svg class="fd-tbl"><use href="#tbl"/></svg></span><span class="fd-n">AW_Product_Sub...</span></li>
        <li class="fd"><svg class="fd-chev"><use href="#chev"/></svg><span class="fd-ic"><svg class="fd-tbl"><use href="#tbl"/></svg></span><span class="fd-n">AW_Returns</span></li>
        <li class="fd"><svg class="fd-chev"><use href="#chev"/></svg><span class="fd-ic"><svg class="fd-tbl"><use href="#tbl"/></svg><svg class="fd-badge"><use href="#badge"/></svg></span><span class="fd-n on">AW_Sales</span></li>
        <li class="fd"><svg class="fd-chev"><use href="#chev"/></svg><span class="fd-ic"><svg class="fd-tbl"><use href="#tbl"/></svg></span><span class="fd-n">AW_Territories_Lo...</span></li>
        <li class="fd"><svg class="fd-chev"><use href="#chev"/></svg><span class="fd-ic"><svg class="fd-tbl"><use href="#tblb"/></svg></span><span class="fd-n">Price Adjustment ...</span></li>
      </ul>
    </aside>
  </main>

  <footer class="status">PAGE 2 OF 3</footer>
</div>
</body>
</html>
```

FILE: styles.css
```css
* { box-sizing: border-box; }
html, body { margin: 0; padding: 0; }
body { width: 3317px; height: 1731px; overflow: hidden; background: #f3f2f1; color: #323130; font-family: "Noto Sans", "Open Sans", sans-serif; }
.defs { position: absolute; width: 0; height: 0; }

.app { display: flex; flex-direction: column; width: 3317px; height: 1731px; border-top: 2px solid #444; border-left: 1px solid #777; }

/* tabs */
.tabs { display: flex; height: 92px; padding-left: 20px; font-size: 39.500px; flex: none; }
.tab { padding: 0 47px; line-height: 92px; height: 92px; color: #252423; position: relative; }
.tab-file { margin-right: 17px; line-height: 108px; padding-right: 47px; }
.tab-on { font-weight: 500; }
.tab-under { display: inline-block; height: 92px; border-bottom: 9px solid #f2c811; line-height: 92px; }
.tab-ctx { background: #fff; color: #b08d0f; font-weight: 500; height: 92px; line-height: 92px; text-align: center; flex: none; }
.tab-format { width: 226px; }
.tab-drill { width: 298px; margin-left: 12px; }

/* ribbon */
.ribbon { display: flex; flex: none; height: 286px; padding-top: 15px; position: relative; z-index: 3; background: #f3f2f1; box-shadow: 0 4px 6px rgba(0,0,0,.14); }
.group { display: flex; flex-direction: column; flex: none; height: 264px; border-right: 3px solid #c8c6c4; }
.group-body { display: flex; flex: 1; min-height: 0; }
.group-label { height: 30px; line-height: 30px; margin-top: -2px; text-align: center; font-size: 27.500px; color: #3b3a39; }
.g-clip { width: 484px; }
.g-data { width: 858px; padding-left: 23px; }
.g-query { width: 351px; padding-left: 21px; }
.g-insert { width: 441px; padding-left: 23px; }
.g-calc { width: 345px; padding-left: 21px; }
.g-share { width: 176px; padding-left: 26px; }
.g-data .group-label { margin-left: -23px; }
.g-query .group-label { margin-left: -21px; }
.g-insert .group-label { margin-left: -23px; }
.g-calc .group-label { margin-left: -21px; }
.g-share .group-label { margin-left: -26px; }

.rb { display: flex; flex-direction: column; align-items: center; padding-top: 12px; flex: none; }
.w106 { width: 106px; } .w118 { width: 118px; } .w120 { width: 120px; } .w130 { width: 130px; } .w132 { width: 132px; }
.w142 { width: 142px; } .w144 { width: 144px; } .w150 { width: 150px; } .w154 { width: 154px; }
.w172 { width: 172px; }
.ri { width: 120px; height: 90px; overflow: visible; margin-bottom: 7px; flex: none; }
.rl { font-size: 33.500px; line-height: 49px; height: 49px; white-space: nowrap; color: #252423; display: flex; align-items: center; }
.rl.dim { color: #a19f9d; }
.rl.sh { padding-right: 10px; }
.caret { width: 17px; height: 13px; margin-left: 8px; }
.fw { fill: #f8f8f8; stroke: #3b3a39; stroke-width: 3.500; }
.ln { fill: none; stroke: #3b3a39; stroke-width: 3.500; }
.or { fill: #f8f8f8; stroke: #d86f00; stroke-width: 3; }
.xl { fill: #fff; font: 700 34px "Liberation Sans", sans-serif; text-anchor: middle; }
.tbA { fill: #1e88c9; font: 300 58px "Noto Sans", sans-serif; text-anchor: middle; }
.paste { width: 154px; padding-left: 16px; }
.smalls { display: flex; flex-direction: column; padding-top: 1px; }
.srow { display: flex; align-items: center; height: 72.500px; gap: 13px; }
.si { width: 50px; height: 50px; overflow: visible; flex: none; }
.sl { font-size: 33.500px; white-space: nowrap; color: #252423; }

/* main */
.main { display: flex; height: 1291px; flex: none; border-top: 5px solid #e6e5e4; }
.rail { width: 123px; flex: none; border-right: 3px solid #e1e1e1; }
.rail-item { height: 120px; display: flex; align-items: center; justify-content: center; }
.rail-on { box-shadow: inset 9px 0 0 #f2c811; }
.rail-ic { width: 42px; height: 42px; }
.rail-t { width: 48px; height: 45px; margin-top: -8px; }
.rail-m { width: 54px; height: 54px; }

.center { width: 2138px; flex: none; display: flex; flex-direction: column; }
.center-row { display: flex; height: 1182px; flex: none; }
.canvas { width: 1534px; flex: none; background: #e9e9e9; padding-top: 130px; overflow: hidden; }
.page { width: 1534px; height: 922px; background: #fff; box-shadow: 0 2px 26px rgba(0,0,0,.16); }
.report { display: block; width: 1534px; height: 922px; font-family: Roboto, "Noto Sans", sans-serif; }
.report text { font-family: Roboto, "Noto Sans", sans-serif; }

.report .logo-a { fill: #ea2a33; font-style: italic; font-size: 20px; font-family: "Liberation Sans", sans-serif; }
.report .logo-b { fill: #000; font-weight: 700; font-size: 36px; font-family: "Liberation Sans", sans-serif; }
.report .card-title { fill: #323130; font-size: 31.500px; font-weight: 600; text-anchor: middle; font-family: "Noto Sans", sans-serif; }
.g-head { fill: #fff; font-size: 14.500px; text-anchor: middle; }
.g-val { fill: #333; font-size: 46px; font-weight: 300; text-anchor: middle; }
.axis { fill: #777; font-size: 13px; }
.axis.end { text-anchor: end; }
.axis.mid { text-anchor: middle; }
.sl-t { fill: #333; font-size: 15px; }
.sl-v { fill: #333; font-size: 14px; }
.k-v { fill: #555; font-size: 15px; }
.k-l { fill: #a8a8a8; font-size: 14px; }
.c-title { fill: #c8c8c8; font-size: 15px; }
.c-title.small { font-size: 12.500px; }
.leg { fill: #777; font-size: 13.500px; }
.grid { stroke: #efefef; stroke-width: 2; fill: none; }
.line-dark { fill: none; stroke: #2f4a4d; stroke-width: 2.500; stroke-linejoin: round; }
.line-teal { fill: none; stroke: #01b8aa; stroke-width: 2.500; stroke-linejoin: round; }
.line-pink { fill: none; stroke: #fd8a88; stroke-width: 2; stroke-linejoin: miter; }

/* filters */
.filters { width: 604px; flex: none; position: relative; background: #fff; border-left: 3px solid #c8c6c4; border-right: 3px solid #c8c6c4; overflow: hidden; }
.f-head { display: flex; align-items: center; height: 142px; padding-left: 35px; margin-bottom: 15px; }
.f-funnel { width: 48px; height: 42px; flex: none; margin-top: -6px; }
.f-title { font-size: 43.500px; font-weight: 600; margin: -8px 0 0 24px; color: #323130; width: 335px; }
.f-eye { width: 36px; height: 24px; flex: none; }
.pchev { width: 20px; height: 36px; flex: none; }
.f-head .pchev { margin-left: 65px; }
.search { display: flex; align-items: center; font-size: 37.500px; background: #fff; border: 3px solid #c8c6c4; border-radius: 4px; color: #323130; }
.search span { margin-top: -4px; }
.mag { width: 44px; height: 44px; flex: none; }
.f-search { margin-left: 25px; width: 538px; height: 91px; padding-left: 30px; gap: 30px; }
.f-sep { height: 3px; background: #c8c6c4; margin-top: 13px; }
.f-sec { display: flex; justify-content: space-between; align-items: center; margin: 49px 37px 26px 25px; height: 50px; font-size: 33.500px; color: #3b3a39; width: 535px; }
.f-dots { font-size: 40px; line-height: 1; margin-top: -8px; letter-spacing: 3px; }
.f-card { margin: 0 0 20px 25px; width: 550px; height: 136px; border: 3px solid #c8c6c4; border-radius: 4px; padding: 10px 0 0 22px; font-size: 33.500px; line-height: 55px; color: #3b3a39; }
.f-add { display: flex; align-items: center; justify-content: center; padding: 0; }
.thumb { position: absolute; width: 18px; background: #d6d6d6; border-radius: 9px; }
.f-thumb { right: 0; top: 289px; height: 479px; }

/* page bar */
.pagebar { display: flex; height: 104px; flex: none; font-size: 34px; color: #484644; }
.pg-nav { width: 120px; flex: none; display: flex; align-items: center; justify-content: space-between; padding: 0 20px 0 16px; border-right: 3px solid #b3b0ad; }
.pg-arrow { width: 14px; height: 24px; }
.pg { display: flex; align-items: center; justify-content: center; border-right: 3px solid #c8c6c4; font-weight: 500; flex: none; }
.pg1 { width: 360px; }
.pg2 { width: 356px; }
.pg3 { width: 387px; }
.pg-on { background: #fff; box-shadow: inset 0 -6px 0 #f2c811; }
.pg-add { width: 117px; height: 96px; margin-top: 5px; background: #f2c811; flex: none; display: flex; align-items: center; justify-content: center; }
.pg-plus { width: 34px; height: 34px; }

/* visualizations */
.viz { width: 545px; flex: none; position: relative; border-right: 3px solid #e1dfdd; }
.p-head { display: flex; align-items: center; justify-content: space-between; height: 150px; padding: 0 40px 0 38px; }
.p-title { font-size: 44.500px; font-weight: 500; color: #3b3a39; }
.viz-grid { display: grid; grid-template-columns: repeat(6, 84px); grid-auto-rows: 72px; padding-left: 13px; height: 432px; }
.vc { display: flex; align-items: center; justify-content: center; }
.vi { width: 50px; height: 50px; overflow: visible; }
.vi .w { fill: #f8f8f8; stroke: #3b3a39; stroke-width: 2.500; }
.vi .b { fill: #83bbeb; stroke: #0063b1; stroke-width: 2.500; }
.vi .b-white { fill: #f8f8f8; }
.vi .g { fill: #c8c6c4; stroke: #8a8886; stroke-width: 2.500; }
.vi .g-dark { stroke: #3b3a39; }
.vi .ax, .vi .l { fill: none; stroke: #3b3a39; stroke-width: 2.500; }
.vi .lb { fill: none; stroke: #1e88c9; stroke-width: 2.500; }
.vsel { width: 66px; height: 66px; background: #cbc9c7; border: 6px solid #5c5b5a; display: flex; align-items: center; justify-content: center; flex: none; }
.vsel .vi { width: 46px; height: 46px; }
.v123 { fill: #1e88c9; font: 400 22px "Noto Sans", sans-serif; text-anchor: middle; }
.vR { fill: #1e88c9; font: 700 42px "Noto Sans", sans-serif; text-anchor: middle; }
.vPy { fill: #1e88c9; font: 600 47px "Noto Sans", sans-serif; text-anchor: middle; }
.viz-sep { height: 4px; background: #e1dfdd; }
.viz-tabs { display: flex; height: 120px; padding-left: 37px; }
.vt { width: 120px; display: flex; flex-direction: column; align-items: center; padding-top: 23px; }
.vti { width: 60px; height: 60px; overflow: visible; flex: none; }
.vt-bar { width: 120px; height: 12px; border-radius: 6px; background: #f2c811; margin-top: 12px; }
.vt-bar.hide { visibility: hidden; }
.well { margin-left: 14px; width: 508px; background: #fff; border: 2.500px dashed #c8c6c4; border-radius: 5px; }
.well1 { height: 109px; padding: 10px 7px; }
.well2 { height: 83px; display: flex; align-items: center; padding-left: 31px; font-size: 33.500px; color: #3b3a39; }
.well3 { height: 185px; padding: 10px 7px; display: flex; flex-direction: column; gap: 8px; }
.well-label { padding-left: 38px; height: 50px; line-height: 50px; font-size: 33.500px; color: #484644; }
.wl2 { margin: 32px 0 16px; }
.wl3 { margin: 31px 0 16px; }
.chip { display: flex; align-items: center; height: 68px; background: #ebebeb; border: 3px solid #c8c6c4; border-radius: 5px; padding-left: 12px; font-size: 33.500px; color: #484644; flex: none; }
.chip-t { width: 384px; white-space: nowrap; }
.chip-v { width: 33px; height: 20px; flex: none; }
.chip-x { width: 24px; height: 24px; margin-left: 20px; flex: none; }
.v-thumb { right: 2px; top: 847px; height: 205px; }

/* fields */
.fields { flex: 1; min-width: 0; overflow: hidden; }
.fd-head { height: 157px; padding: 0 9px 12px 37px; }
.fd-search { margin-left: 13px; height: 88px; padding-left: 34px; gap: 26px; border-right: 0; border-radius: 4px 0 0 4px; }
.fd-sep { height: 3px; margin-top: 15px; background: #e1dfdd; }
.fd-list { list-style: none; margin: 0; padding: 22px 0 0 13px; }
.fd { display: flex; align-items: center; height: 81px; }
.fd-chev { width: 33px; height: 20px; flex: none; }
.fd-ic { position: relative; width: 38px; height: 36px; margin-left: 22px; flex: none; }
.fd-tbl { display: block; width: 38px; height: 36px; }
.fd-badge { position: absolute; left: 21px; top: 21px; width: 36px; height: 36px; overflow: visible; }
.fd-n { margin-left: 38px; font-size: 33.800px; color: #252423; white-space: nowrap; }
.fd-n.on { font-weight: 600; }

/* status */
.status { flex: 1; border-top: 3px solid #c8c6c4; padding: 7px 0 0 16px; font-size: 32px; line-height: 54px; color: #3b3a39; }
```
